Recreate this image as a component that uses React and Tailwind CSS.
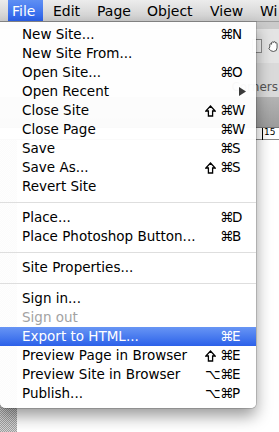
import React from "react";

const items = [
  { label: "New Site...", mods: [], key: "N" },
  { label: "New Site From..." },
  { label: "Open Site...", mods: [], key: "O" },
  { label: "Open Recent", submenu: true },
  { label: "Close Site", mods: ["shift"], key: "W" },
  { label: "Close Page", mods: [], key: "W" },
  { label: "Save", mods: [], key: "S" },
  { label: "Save As...", mods: ["shift"], key: "S" },
  { label: "Revert Site" },
  { sep: true },
  { label: "Place...", mods: [], key: "D" },
  { label: "Place Photoshop Button...", mods: [], key: "B" },
  { sep: true },
  { label: "Site Properties..." },
  { sep: true },
  { label: "Sign in..." },
  { label: "Sign out", disabled: true },
  { label: "Export to HTML...", mods: [], key: "E", active: true },
  { label: "Preview Page in Browser", mods: ["shift"], key: "E" },
  { label: "Preview Site in Browser", mods: ["⌥"], key: "E" },
  { label: "Publish...", mods: ["⌥"], key: "P" },
];

// shift key glyph, drawn since the fallback font's arrow is too thin
const ShiftIcon = ({ color }) => (
  <svg width="11" height="12" viewBox="0 0 11 12">
    <path
      d="M5.5 1 L10.2 6 L7.6 6 L7.6 11 L3.4 11 L3.4 6 L0.8 6 Z"
      fill="none"
      stroke={color}
      strokeWidth="1.3"
      strokeLinejoin="miter"
    />
  </svg>
);

const MenuRow = ({ item }) => {
  if (item.sep) {
    return (
      <div className="h-[12px] flex items-center">
        <div className="h-px w-full bg-[#dedede]" />
      </div>
    );
  }
  const color = item.active
    ? "text-white bg-gradient-to-b from-[#6895f4] to-[#2c60e9]"
    : item.disabled
    ? "text-[#a3a3a3]"
    : "text-black";
  return (
    <div className={`h-[19px] flex items-center pl-[22px] pr-[12px] ${color}`}>
      <span className="flex-1 whitespace-nowrap">{item.label}</span>
      {item.key && (
        <span className="flex items-center">
          {item.mods.map((m) =>
            m === "shift" ? (
              <span key={m} className="w-[15px] flex items-center">
                <ShiftIcon color={item.active ? "#fff" : "#000"} />
              </span>
            ) : (
              <span key={m} className="w-[15px] text-left">
                {m}
              </span>
            )
          )}
          <span className="w-[11px] text-center">⌘</span>
          <span className="w-[13px] pl-[1px] text-left">{item.key}</span>
        </span>
      )}
      {item.submenu && (
        <svg width="7" height="9" viewBox="0 0 7 9" className="mr-[-2px]">
          <path d="M0 0 L7 4.5 L0 9 Z" fill="#3a3a3a" />
        </svg>
      )}
    </div>
  );
};

const App = () => {
  return (
    <div className="relative w-[279px] h-[432px] overflow-hidden bg-white font-['DejaVu_Sans',sans-serif] text-[13.5px] leading-none">
      {/* Menu bar */}
      <div className="h-[22px] flex items-stretch bg-gradient-to-b from-[#ececec] to-[#cdcdcd] border-b border-[#a0a0a0] text-black text-[14px] overflow-hidden">
        <div className="shrink-0 ml-[8px] w-[35px] pl-[4px] flex items-center text-white bg-gradient-to-b from-[#5f8ff3] to-[#2a60ea]">
          File
        </div>
        <div className="shrink-0 ml-[10px] w-[44px] flex items-center">Edit</div>
        <div className="shrink-0 w-[50px] flex items-center">Page</div>
        <div className="shrink-0 w-[63px] flex items-center">Object</div>
        <div className="shrink-0 w-[50px] flex items-center">View</div>
        <div className="shrink-0 flex items-center whitespace-nowrap">Wi</div>
      </div>

      {/* App behind the menu */}
      <div className="flex flex-col">
        <div className="h-[7px] bg-[#cbcbcb]" />
        <div className="h-[34px] bg-[#e4e4e4] flex items-center pl-[252px] gap-[6px]">
          <div className="w-[11px] h-[14px] border border-[#8a8a8a] bg-[#f0f0f0]" />
          <svg width="12" height="13" viewBox="0 0 12 13">
            <path
              d="M2 7 L2 4 Q3 3 4 4 L4 2 Q5 1 6 2 L6 1.5 Q7 0.5 8 1.5 L8 2.5 Q9 2 10 3 L10 8 Q10 12 6 12 Q3 12 1 9 Z"
              fill="#fff"
              stroke="#333"
              strokeWidth="0.9"
            />
          </svg>
        </div>
        <div className="h-[34px] bg-[#dadada] flex items-end justify-end pb-[4px] pr-[1px] text-[12px] text-[#555] whitespace-nowrap">
          Corners
        </div>
        <div className="h-[31px] bg-gradient-to-b from-[#b4b4b4] to-[#9c9c9c] border-b border-[#777]" />
        <div className="h-[12px] bg-white border-b border-[#888] flex items-start pl-[262px] text-[9px] text-black">
          <div className="h-[12px] border-l border-black pl-[1px]">15</div>
        </div>
        <div className="flex h-[300px]">
          <div className="w-[17px] bg-[repeating-conic-gradient(#9e9e9e_0_25%,#d4d4d4_0_50%)] bg-[length:2px_2px]" />
          <div className="flex-1 bg-white" />
        </div>
      </div>

      {/* File menu dropdown */}
      <div className="absolute left-0 top-[22px] w-[256px] pt-[3px] pb-[5px] bg-[rgba(255,255,255,0.96)] rounded-b-[5px] shadow-[0_0_0_1px_rgba(0,0,0,0.15),0_8px_16px_rgba(0,0,0,0.4)]">
        {items.map((item, i) => (
          <MenuRow key={i} item={item} />
        ))}
      </div>
    </div>
  );
};

export default App;
